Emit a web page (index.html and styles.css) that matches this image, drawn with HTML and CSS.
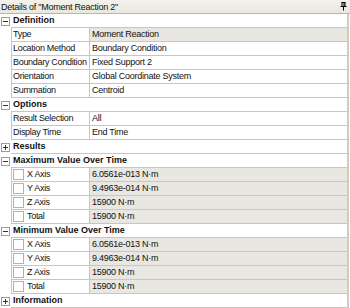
FILE: index.html
```html
<!DOCTYPE html>
<html lang="en">
<head>
    <meta charset="UTF-8">
    <title>Details of "Moment Reaction 2"</title>
    <link rel="stylesheet" href="styles.css">
</head>
<body>
    <div class="panel">
        <div class="titlebar">
            <span>Details of "Moment Reaction 2"</span>
            <svg class="pin" width="7" height="9" viewBox="0 0 7 9">
                <path d="M1.5 0.5h4M2 0.5v4M5 0.5v4M4 0.5v4M0.5 4.5h6M3.5 4.5v4" stroke="#000" stroke-width="1" fill="none"/>
            </svg>
        </div>
        <div class="table">
            <div class="row head"><span class="gutter"><i class="box minus"></i></span><span class="title">Definition</span></div>
            <div class="row"><span class="gutter"></span><span class="name">Type</span><span class="value ro">Moment Reaction</span></div>
            <div class="row"><span class="gutter"></span><span class="name">Location Method</span><span class="value">Boundary Condition</span></div>
            <div class="row"><span class="gutter"></span><span class="name">Boundary Condition</span><span class="value">Fixed Support 2</span></div>
            <div class="row"><span class="gutter"></span><span class="name">Orientation</span><span class="value">Global Coordinate System</span></div>
            <div class="row"><span class="gutter"></span><span class="name">Summation</span><span class="value">Centroid</span></div>

            <div class="row head"><span class="gutter"><i class="box minus"></i></span><span class="title">Options</span></div>
            <div class="row"><span class="gutter"></span><span class="name">Result Selection</span><span class="value">All</span></div>
            <div class="row"><span class="gutter"></span><span class="name">Display Time</span><span class="value">End Time</span></div>

            <div class="row head"><span class="gutter"><i class="box plus"></i></span><span class="title">Results</span></div>

            <div class="row head"><span class="gutter"><i class="box minus"></i></span><span class="title">Maximum Value Over Time</span></div>
            <div class="row"><span class="gutter"></span><span class="name check"><i class="cb"></i>X Axis</span><span class="value ro">6.0561e-013 N·m</span></div>
            <div class="row"><span class="gutter"></span><span class="name check"><i class="cb"></i>Y Axis</span><span class="value ro">9.4963e-014 N·m</span></div>
            <div class="row"><span class="gutter"></span><span class="name check"><i class="cb"></i>Z Axis</span><span class="value ro">15900 N·m</span></div>
            <div class="row"><span class="gutter"></span><span class="name check"><i class="cb"></i>Total</span><span class="value ro">15900 N·m</span></div>

            <div class="row head"><span class="gutter"><i class="box minus"></i></span><span class="title">Minimum Value Over Time</span></div>
            <div class="row"><span class="gutter"></span><span class="name check"><i class="cb"></i>X Axis</span><span class="value ro">6.0561e-013 N·m</span></div>
            <div class="row"><span class="gutter"></span><span class="name check"><i class="cb"></i>Y Axis</span><span class="value ro">9.4963e-014 N·m</span></div>
            <div class="row"><span class="gutter"></span><span class="name check"><i class="cb"></i>Z Axis</span><span class="value ro">15900 N·m</span></div>
            <div class="row"><span class="gutter"></span><span class="name check"><i class="cb"></i>Total</span><span class="value ro">15900 N·m</span></div>

            <div class="row head"><span class="gutter"><i class="box plus"></i></span><span class="title">Information</span></div>
        </div>
    </div>
</body>
</html>
```

FILE: styles.css
```css
body {
    margin: 0;
    font-family: "Liberation Sans", Arial, sans-serif;
    font-size: 9px;
    color: #111;
    background: #fff;
}

.panel {
    width: 350px;
    height: 308px;
    overflow: hidden;
    background: #fff;
}

.titlebar {
    height: 13px;
    display: flex;
    align-items: center;
    justify-content: space-between;
    padding: 0 3px 0 1px;
    background: linear-gradient(to bottom, #f3f2ec, #e9e8de);
    border-bottom: 1px solid #b9b7a8;
    letter-spacing: -0.25px;
}

.pin {
    display: block;
}

.table {
    width: 347px;
    border-right: 2px solid #cfccc0;
}

.row {
    display: flex;
    height: 14px;
}

.gutter {
    width: 11px;
    flex: none;
    display: flex;
    align-items: center;
    justify-content: center;
    background: #fff;
}

.name,
.value,
.title {
    height: 13px;
    line-height: 13px;
    border-bottom: 1px solid #c9c7ba;
    white-space: nowrap;
    overflow: hidden;
}

.title {
    flex: 1;
    padding-left: 2px;
    font-weight: bold;
}

.name {
    width: 76px;
    flex: none;
    padding-left: 1px;
    border-left: 1px solid #c9c7ba;
    border-right: 1px solid #c9c7ba;
    letter-spacing: -0.3px;
}

.value {
    flex: 1;
    padding-left: 2px;
    letter-spacing: -0.25px;
}

.value.ro {
    background: #e8e7e2;
}

.check {
    display: flex;
    align-items: center;
    padding-left: 1px;
    width: 76px;
}

.cb {
    width: 9px;
    height: 9px;
    border: 1px solid #b4b2a6;
    background: #fff;
    margin-right: 3px;
    flex: none;
}

.box {
    position: relative;
    width: 7px;
    height: 7px;
    border: 1px solid #9d9d9d;
    background: #fff;
}

.box::before {
    content: '';
    position: absolute;
    left: 1px;
    top: 3px;
    width: 5px;
    height: 1px;
    background: #333;
}

.plus::after {
    content: '';
    position: absolute;
    left: 3px;
    top: 1px;
    width: 1px;
    height: 5px;
    background: #333;
}
```
